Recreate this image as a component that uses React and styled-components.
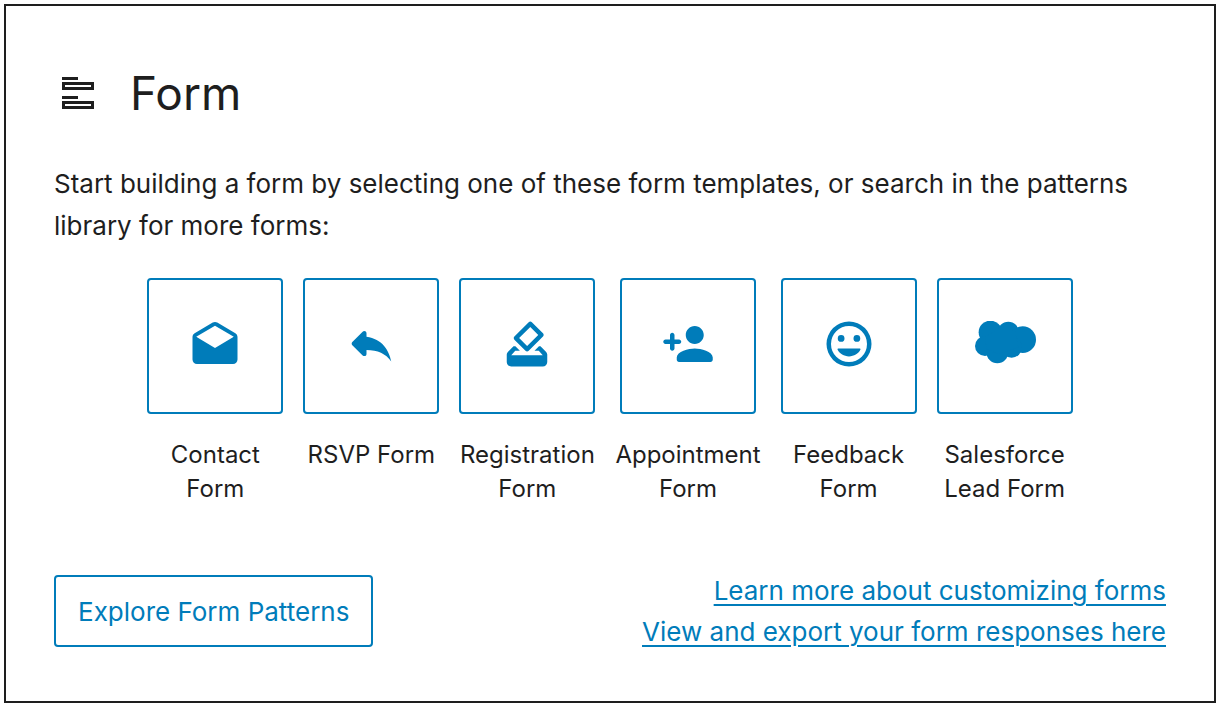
import React from 'react';
import styled, { createGlobalStyle } from 'styled-components';

const GlobalStyle = createGlobalStyle`
*{
    box-sizing: border-box;
}
body{
    margin: 0;
    background-color: #fff;
    color: #1e1e1e;
    font-family: Inter, "Liberation Sans", sans-serif;
    font-size: 26px;
    line-height: 42px;
}
`;

const Page = styled.main`
    padding: 4px 6px 4px 4px;
`;

const Card = styled.section`
    padding: 48px 48px 49px;
    border: 2px solid #1e1e1e;
`;

const Header = styled.header`
    display: flex;
    align-items: center;
    gap: 28px;
    min-height: 78px;
    margin-bottom: 31px;
`;

const Title = styled.h1`
    margin: 0;
    font-size: 46px;
    font-weight: 400;
    line-height: 56px;
`;

const Intro = styled.p`
    margin: 0 0 31px;
`;

const Templates = styled.ul`
    display: flex;
    justify-content: center;
    gap: 20px;
    margin: 0 0 64px;
    padding: 0;
    list-style: none;
`;

const TemplateItem = styled.li`
    display: flex;
    flex-direction: column;
    align-items: center;
    gap: 24px;
    width: min-content;
    min-width: 136px;
`;

const TemplateButton = styled.button`
    display: flex;
    align-items: center;
    justify-content: center;
    width: 136px;
    height: 136px;
    padding: 0 0 4px;
    border: 2px solid #007cba;
    border-radius: 4px;
    background: none;
    color: #007cba;
    cursor: pointer;
`;

const TemplateLabel = styled.span`
    font-size: 24px;
    line-height: 34px;
    text-align: center;
`;

const Footer = styled.footer`
    display: flex;
    align-items: center;
    justify-content: space-between;
`;

const ExploreButton = styled.button`
    height: 72px;
    padding: 2px 22px 0;
    border: 2px solid #007cba;
    border-radius: 4px;
    background: none;
    color: #007cba;
    font: inherit;
    cursor: pointer;
`;

const Links = styled.nav`
    display: flex;
    flex-direction: column;
    align-items: flex-end;
    line-height: 41px;
`;

const Link = styled.a`
    color: #007cba;
    text-decoration: underline;
    text-decoration-thickness: 2px;
    text-underline-offset: 4px;
`;

const Icon = styled.svg`
    flex: none;
    fill: currentColor;
`;

function FormIcon() {
    return (
        <Icon width="48" height="48" viewBox="0 0 48 48" aria-hidden="true">
            <path d="M8 8h16v3H8zM8 27h16v3H8z" />
            <path fillRule="evenodd" d="M8 13h32v8H8zm3 3v2h26v-2zM8 32h32v8H8zm3 3v2h26v-2z" />
        </Icon>
    )
}

function TemplateIcon({ d }) {
    return (
        <Icon width="54" height="54" viewBox="0 0 24 24" aria-hidden="true">
            <path fillRule="evenodd" d={d} />
        </Icon>
    )
}

function SalesforceIcon() {
    return (
        <Icon width="62" height="46" viewBox="-3 1 186 138" aria-hidden="true">
            <circle cx="46" cy="35" r="35" />
            <circle cx="100" cy="35" r="32" />
            <circle cx="143" cy="57" r="40" />
            <circle cx="110" cy="80" r="31" />
            <circle cx="67" cy="95" r="33" />
            <circle cx="30" cy="76" r="30" />
            <path d="M30 50L60 30h60l10 50-60 20-35-15z" />
        </Icon>
    )
}

const templates = [
    {
        name: 'Contact Form',
        icon: <TemplateIcon d="M22 8.9c0-.72-.38-1.35-.95-1.7l-8.04-4.71c-.62-.37-1.4-.37-2.02 0L2.95 7.2C2.38 7.55 2 8.18 2 8.9v10c0 1.1.9 2 2 2h16c1.1 0 2-.9 2-2zM12 13.8L3.65 8.74 12 3.9l8.35 4.84z" />,
    },
    {
        name: 'RSVP Form',
        icon: <TemplateIcon d="M10 8.8V7.21c0-.89-1.08-1.34-1.71-.71L3.7 11.09c-.39.39-.39 1.02 0 1.41l4.59 4.59c.63.63 1.71.19 1.71-.7V14.7c5 0 8.5 1.6 11 5.1-1-5-4-10-11-11z" />,
    },
    {
        name: 'Registration Form',
        icon: <TemplateIcon d="M18 13h-.68l-2 2h1.91L19 17H5l1.78-2h2.05l-2-2H6l-2.41 2.42c-.38.38-.59.88-.59 1.41V20c0 1.1.89 2 1.99 2H19c1.1 0 2-.89 2-2v-3.17c0-.53-.21-1.04-.59-1.41zm-1-5.05l-4.95 4.95-3.54-3.54 4.95-4.95zm-4.24-5.66L6.39 8.66c-.39.39-.39 1.02 0 1.41l4.95 4.95c.39.39 1.02.39 1.41 0l6.36-6.36c.39-.39.39-1.02 0-1.41L14.16 2.3c-.38-.4-1.01-.4-1.4-.01z" />,
    },
    {
        name: 'Appointment Form',
        icon: <TemplateIcon d="M15 12c2.21 0 4-1.79 4-4s-1.79-4-4-4-4 1.79-4 4 1.79 4 4 4zm-9-2V8c0-.55-.45-1-1-1s-1 .45-1 1v2H2c-.55 0-1 .45-1 1s.45 1 1 1h2v2c0 .55.45 1 1 1s1-.45 1-1v-2h2c.55 0 1-.45 1-1s-.45-1-1-1H6zm9 4c-2.67 0-8 1.34-8 4v1c0 .55.45 1 1 1h14c.55 0 1-.45 1-1v-1c0-2.66-5.33-4-8-4z" />,
    },
    {
        name: 'Feedback Form',
        icon: <TemplateIcon d="M12 2a10 10 0 1 0 0 20 10 10 0 0 0 0-20zm0 18a8 8 0 1 1 0-16 8 8 0 0 1 0 16zM8.5 8a1.5 1.5 0 1 0 0 3 1.5 1.5 0 0 0 0-3zm7 0a1.5 1.5 0 1 0 0 3 1.5 1.5 0 0 0 0-3zM7.3 14c-.35 0-.5.3-.35.6.9 1.8 2.8 2.9 5.05 2.9s4.15-1.1 5.05-2.9c.15-.3 0-.6-.35-.6z" />,
    },
    {
        name: 'Salesforce Lead Form',
        icon: <SalesforceIcon />,
    },
];

function Template({ id, name, icon }) {
    return (
        <TemplateItem>
            <TemplateButton type="button" aria-labelledby={id}>{icon}</TemplateButton>
            <TemplateLabel id={id}>{name}</TemplateLabel>
        </TemplateItem>
    )
}

function App() {
    return (
        <Page>
            <GlobalStyle />
            <Card>
                <Header>
                    <FormIcon />
                    <Title>Form</Title>
                </Header>
                <Intro>
                    Start building a form by selecting one of these form templates, or search in the patterns library for more forms:
                </Intro>
                <Templates>
                    {templates.map((template, index) => (
                        <Template key={template.name} id={`template-${index}`} name={template.name} icon={template.icon} />
                    ))}
                </Templates>
                <Footer>
                    <ExploreButton type="button">Explore Form Patterns</ExploreButton>
                    <Links>
                        <Link href="#customizing">Learn more about customizing forms</Link>
                        <Link href="#responses">View and export your form responses here</Link>
                    </Links>
                </Footer>
            </Card>
        </Page>
    )
}

export default App
